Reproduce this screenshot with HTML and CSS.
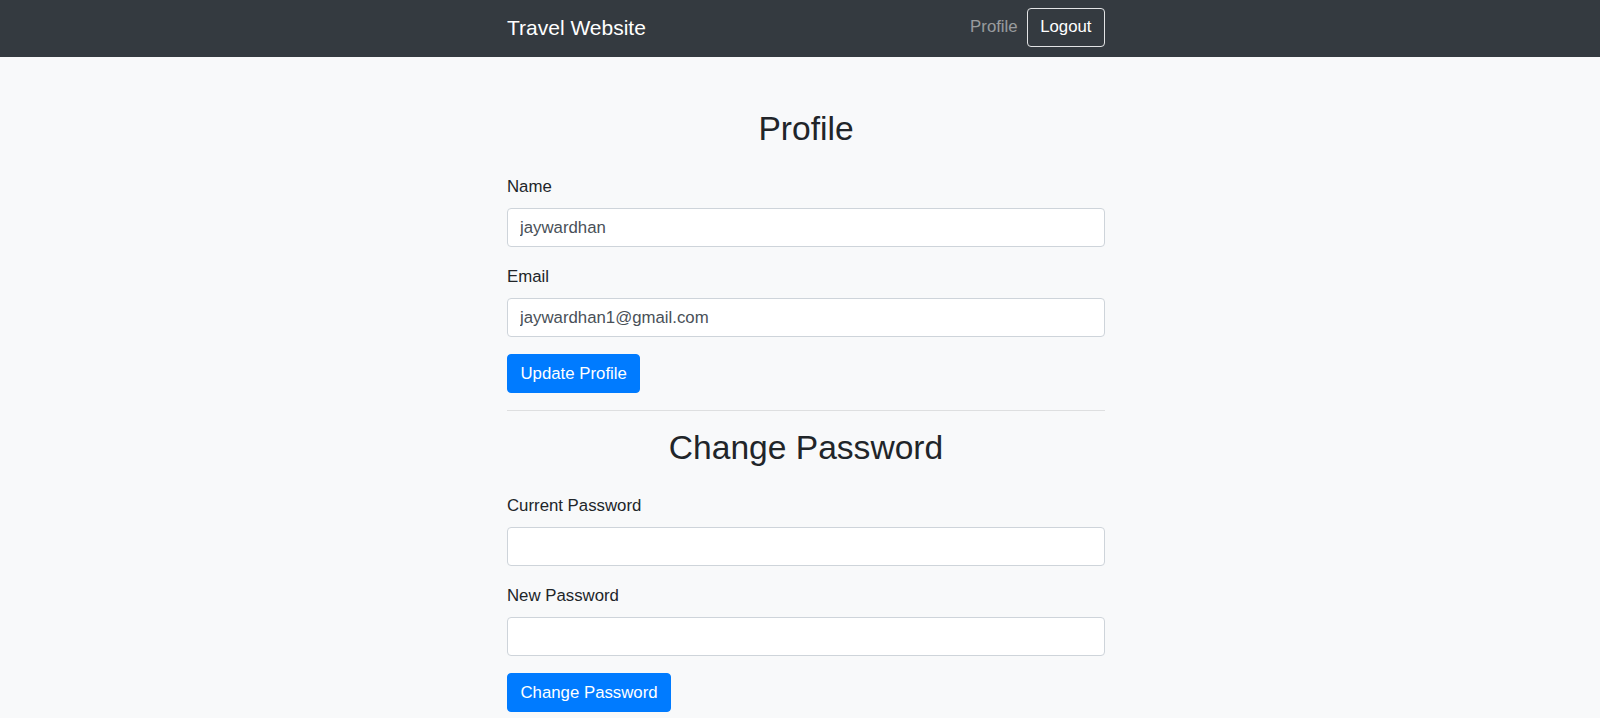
FILE: index.html
```html
<!DOCTYPE html>
<html lang="en">
<head>
<meta charset="utf-8">
<title>Travel Website - Profile</title>
<link rel="stylesheet" href="styles.css">
</head>
<body>
<nav class="navbar">
  <div class="container nav-inner">
    <a class="brand" href="#">Travel Website</a>
    <div class="nav-links">
      <a class="nav-link" href="#">Profile</a>
      <button class="btn-logout" type="button">Logout</button>
    </div>
  </div>
</nav>
<main class="page">
  <div class="container">
    <h2 class="title">Profile</h2>
    <form class="form">
      <div class="form-group">
        <label class="label" for="name">Name</label>
        <input class="input" id="name" type="text" value="jaywardhan">
      </div>
      <div class="form-group">
        <label class="label" for="email">Email</label>
        <input class="input" id="email" type="email" value="jaywardhan1@gmail.com">
      </div>
      <button class="btn-primary" type="button">Update Profile</button>
    </form>
    <hr class="divider">
    <h2 class="title">Change Password</h2>
    <form class="form">
      <div class="form-group">
        <label class="label" for="cur">Current Password</label>
        <input class="input" id="cur" type="password">
      </div>
      <div class="form-group">
        <label class="label" for="new">New Password</label>
        <input class="input" id="new" type="password">
      </div>
      <button class="btn-primary" type="button">Change Password</button>
    </form>
  </div>
</main>
</body>
</html>
```

FILE: styles.css
```css
* {
  box-sizing: border-box;
}

html, body {
  margin: 0;
  padding: 0;
}

body {
  background: #f8f9fa;
  color: #212529;
  font-family: "Liberation Sans", Arial, sans-serif;
  font-size: 16.8px;
  line-height: 1.5;
  overflow: hidden;
}

.container {
  width: 598px;
  margin: 0 auto;
}

.navbar {
  background: #343a40;
  height: 57px;
  padding-left: 12px;
  display: flex;
}

.nav-inner {
  display: flex;
  align-items: center;
  justify-content: space-between;
  padding-bottom: 3px;
}

.brand {
  color: #fff;
  text-decoration: none;
  font-size: 21px;
  line-height: 1.5;
  padding-top: 2px;
}

.nav-links {
  display: flex;
  align-items: center;
}

.nav-link {
  color: rgba(255, 255, 255, 0.5);
  text-decoration: none;
  margin-right: 9px;
}

.btn-logout {
  height: 39px;
  padding: 0 12.5px;
  background: transparent;
  color: #fff;
  border: 1px solid #e2e3e5;
  border-radius: 4px;
  font-family: inherit;
  font-size: 16.8px;
  cursor: pointer;
}

.page {
  padding-left: 12px;
  padding-top: 51.7px;
}

.title {
  margin: 0 0 25.3px;
  font-size: 33.6px;
  font-weight: 400;
  line-height: 1.2;
  text-align: center;
}

.form {
  margin: 0;
}

.form-group {
  margin-bottom: 17px;
}

.label {
  display: block;
  margin-bottom: 8.5px;
  line-height: 25px;
}

.input {
  display: block;
  width: 100%;
  height: 39.5px;
  padding: 0 12px;
  border: 1px solid #ced4da;
  border-radius: 4px;
  background: #fff;
  color: #495057;
  font-family: inherit;
  font-size: 16.8px;
}

.btn-primary {
  display: inline-block;
  height: 39px;
  padding: 0 12.5px;
  background: #007bff;
  color: #fff;
  border: 1px solid #007bff;
  border-radius: 4px;
  font-family: inherit;
  font-size: 16.8px;
  cursor: pointer;
}

.divider {
  margin: 17px 0 16.5px;
  border: 0;
  border-top: 1px solid rgba(0, 0, 0, 0.1);
}
```
